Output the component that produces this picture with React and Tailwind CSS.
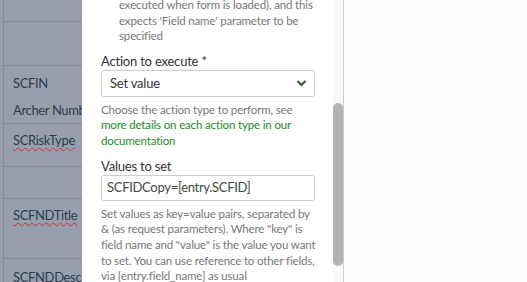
import React from "react";

const font = { fontFamily: "Lato, 'Noto Sans', sans-serif" };

const wavy = "underline decoration-wavy decoration-[#d03030] decoration-1 underline-offset-2";

export default function App() {
  return (
    <div className="flex w-[527px] h-[282px] overflow-hidden bg-[#fefefe]" style={font}>
      {/* dimmed table */}
      <div className="w-[82px] shrink-0 h-full bg-[#989fac] text-[13px] tracking-[-0.35px] text-[#2d3a52] overflow-hidden">
        <div className="ml-[3px] border-l border-[#858c99] h-full flex flex-col">
          <div className="h-[22px] shrink-0 border-b border-[#858c99]" />
          <div className="h-[44px] shrink-0 border-b border-[#858c99]" />
          <div className="h-[58px] shrink-0 border-b border-[#858c99] pl-[9px] pt-[4px] whitespace-nowrap leading-[27px]">
            <div>SCFIN</div>
            <div>Archer Number</div>
          </div>
          <div className="h-[43px] shrink-0 border-b border-[#858c99] pl-[9px] pt-[5px] whitespace-nowrap leading-[22px]">
            <span className={wavy}>SCRiskType</span>
          </div>
          <div className="h-[32px] shrink-0 border-b border-[#858c99]" />
          <div className="h-[60px] shrink-0 border-b border-[#858c99] pl-[9px] pt-[5px] whitespace-nowrap leading-[22px]">
            <span className={wavy}>SCFNDTitle</span>
          </div>
          <div className="flex-1 pl-[9px] pt-[7px] whitespace-nowrap leading-[22px]">
            <span className={wavy}>SCFNDDesc</span>
          </div>
        </div>
      </div>

      {/* panel */}
      <div className="w-[251px] shrink-0 h-full bg-white overflow-hidden pl-[19px] pr-[18px]">
        <div className="mt-[-3px] pl-[18px] text-[11.5px] tracking-[-0.15px] leading-[15.6px] text-[#777]">
          <div className="whitespace-nowrap">executed when form is loaded), and this</div>
          <div className="whitespace-nowrap">expects 'Field name' parameter to be</div>
          <div>specified</div>
        </div>
        <div className="mt-[9px] text-[13px] tracking-[-0.2px] leading-[17px] text-[#333]">Action to execute *</div>
        <div className="h-[27px] border border-[#cccccc] rounded-[3px] flex items-center justify-between pl-[8px] pr-[7px] text-[13px] tracking-[-0.2px] text-[#333]">
          <span>Set value</span>
          <svg width="11" height="8" viewBox="0 0 11 8" fill="none">
            <path d="M1.5 2 L5.5 6 L9.5 2" stroke="#36553a" strokeWidth="2" />
          </svg>
        </div>
        <div className="mt-[5px] text-[11.5px] tracking-[-0.15px] leading-[15.6px]">
          <div className="text-[#777] whitespace-nowrap">Choose the action type to perform, see</div>
          <div className="text-[#1d8a2a] whitespace-nowrap">more details on each action type in our</div>
          <div className="text-[#1d8a2a]">documentation</div>
        </div>
        <div className="mt-[9px] text-[13px] tracking-[-0.2px] leading-[17px] text-[#333]">Values to set</div>
        <div className="h-[26px] border border-[#cccccc] rounded-[3px] flex items-center pl-[5px] text-[13px] tracking-[-0.3px] text-[#3a4e3c]">
          SCFIDCopy=[entry.SCFID]
        </div>
        <div className="mt-[5px] text-[11.5px] tracking-[-0.15px] leading-[15.7px] text-[#777]">
          <div className="whitespace-nowrap">Set values as key=value pairs, separated by</div>
          <div className="whitespace-nowrap">&amp; (as request parameters). Where "key" is</div>
          <div className="whitespace-nowrap">field name and "value" is the value you want</div>
          <div className="whitespace-nowrap">to set. You can use reference to other fields,</div>
          <div className="whitespace-nowrap">via [entry.field_name] as usual</div>
        </div>
      </div>

      {/* scrollbar */}
      <div className="w-[10px] shrink-0 h-full bg-[#f8f8f8] pt-[103px]">
        <div className="h-[163px] w-[10px] rounded-full bg-[#b3b3b3]" />
      </div>
      <div className="w-px shrink-0 h-full bg-[#cccccc]" />
      <div className="flex-1 h-full bg-[#fefefe]" />
    </div>
  );
}
